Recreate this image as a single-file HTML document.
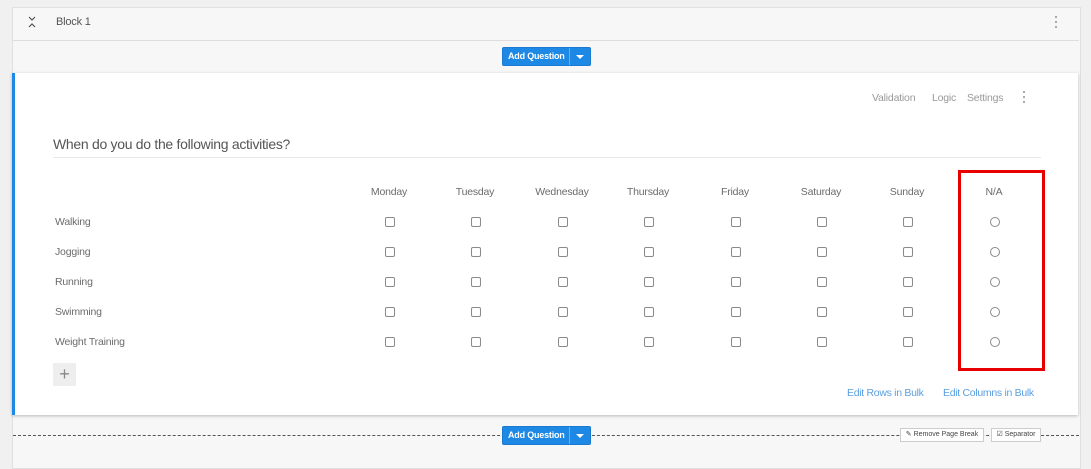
<!DOCTYPE html><html><head><style>
body{margin:0;width:1091px;height:460px;background:#f0f0f0;font-family:"Liberation Sans",sans-serif;position:relative;overflow:hidden}
.a{position:absolute}
.t{font-size:10.5px;color:#6b6b6b;letter-spacing:-0.2px}
.cb{position:absolute;width:8px;height:8px;border:1px solid #8a8a8a;border-radius:2px;background:#fff}
.rd{position:absolute;width:8px;height:8px;border:1px solid #8a8a8a;border-radius:50%;background:#fff}
.btn{position:absolute;height:17px;background:#1e88e5;border:1px solid #1a7ad0;border-radius:2px;color:#fff;font-size:9px;font-weight:bold;line-height:17px;letter-spacing:-0.2px}
.dots div{width:2px;height:2px;background:#aaa;margin-bottom:3px}
</style></head><body>
<div class="a" style="left:12px;top:7px;width:1067px;height:460px;background:#f7f7f7;border:1px solid #e0e0e0"></div>
<div class="a" style="left:13px;top:40px;width:1066px;height:1px;background:#ddd"></div>
<svg class="a" style="left:27px;top:16px" width="10" height="12" viewBox="0 0 10 12"><path d="M2 1 L5 4 L8 1 M2 11 L5 8 L8 11" fill="none" stroke="#555" stroke-width="1.2"/></svg>
<div class="a" style="left:56px;top:16px;color:#555;font-size:11px;letter-spacing:-0.2px">Block 1</div>
<div class="a dots" style="left:1055px;top:16px"><div></div><div></div><div></div></div>
<div class="btn" style="left:502px;top:47px;width:87px"><span style="padding-left:5px">Add Question</span><span style="position:absolute;left:66px;top:0;width:1px;height:17px;background:#6ab0f0"></span><span style="position:absolute;left:73px;top:7px;border:4px solid transparent;border-top:4px solid #fff;border-bottom:0"></span></div>
<div class="a" style="left:12px;top:73px;width:1063px;height:342px;background:#fff;border-left:3px solid #1e88e5;box-shadow:0 1px 3px rgba(0,0,0,.25)"></div>
<div class="a t" style="left:872px;top:92px;color:#999">Validation</div>
<div class="a t" style="left:932px;top:92px;color:#999">Logic</div>
<div class="a t" style="left:967px;top:92px;color:#999">Settings</div>
<div class="a dots" style="left:1023px;top:91px"><div></div><div></div><div></div></div>
<div class="a" style="left:53px;top:136px;font-size:14px;color:#555;letter-spacing:-0.3px">When do you do the following activities?</div>
<div class="a" style="left:53px;top:157px;width:988px;height:1px;background:#e8e8e8"></div>
<div class="a t" style="left:359px;top:186px;width:60px;text-align:center">Monday</div>
<div class="a t" style="left:445px;top:186px;width:60px;text-align:center">Tuesday</div>
<div class="a t" style="left:527px;top:186px;width:70px;text-align:center">Wednesday</div>
<div class="a t" style="left:618px;top:186px;width:60px;text-align:center">Thursday</div>
<div class="a t" style="left:705px;top:186px;width:60px;text-align:center">Friday</div>
<div class="a t" style="left:791px;top:186px;width:60px;text-align:center">Saturday</div>
<div class="a t" style="left:877px;top:186px;width:60px;text-align:center">Sunday</div>
<div class="a t" style="left:964px;top:186px;width:60px;text-align:center">N/A</div>
<div class="a t" style="left:55px;top:216px">Walking</div>
<div class="a t" style="left:55px;top:246px">Jogging</div>
<div class="a t" style="left:55px;top:276px">Running</div>
<div class="a t" style="left:55px;top:306px">Swimming</div>
<div class="a t" style="left:55px;top:336px">Weight Training</div>
<div id="g"></div>
<script>
var xs=[389,475,562,648,735,821,907],ys=[221,251,281,311,341],h='';
ys.forEach(function(y){xs.forEach(function(x){h+='<div class="cb" style="left:'+(x-4)+'px;top:'+(y-4)+'px"></div>'});h+='<div class="rd" style="left:990px;top:'+(y-4)+'px"></div>'});
document.getElementById('g').innerHTML=h;
</script>
<div class="a" style="left:958px;top:170px;width:81px;height:195px;border:3px solid #e80000"></div>
<div class="a" style="left:53px;top:363px;width:23px;height:23px;background:#eee;color:#888;font-size:18px;text-align:center;line-height:22px">+</div>
<div class="a" style="left:847px;top:387px;font-size:10.5px;color:#5a9fe0;letter-spacing:-0.3px">Edit Rows in Bulk</div>
<div class="a" style="left:943px;top:387px;font-size:10.5px;color:#5a9fe0;letter-spacing:-0.3px">Edit Columns in Bulk</div>
<div class="a" style="left:13px;top:435px;width:1066px;border-top:1px dashed #555"></div>
<div class="btn" style="left:502px;top:426px;width:87px"><span style="padding-left:5px">Add Question</span><span style="position:absolute;left:66px;top:0;width:1px;height:17px;background:#6ab0f0"></span><span style="position:absolute;left:73px;top:7px;border:4px solid transparent;border-top:4px solid #fff;border-bottom:0"></span></div>
<div class="a" style="left:900px;top:428px;width:82px;height:12px;background:#fff;border:1px solid #ccc;font-size:7px;color:#444;line-height:12px;text-align:center">&#9998; Remove Page Break</div>
<div class="a" style="left:991px;top:428px;width:48px;height:12px;background:#fff;border:1px solid #ccc;font-size:7px;color:#444;line-height:12px;text-align:center">&#9745; Separator</div>
</body></html>
